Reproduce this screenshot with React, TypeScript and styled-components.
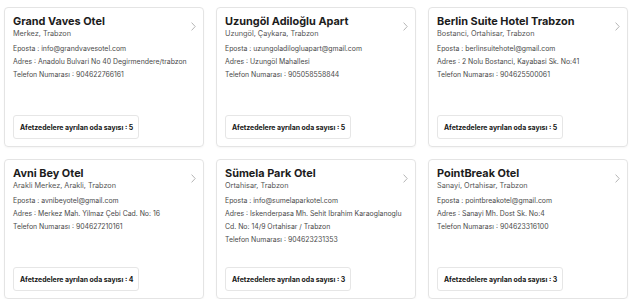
import styled, { createGlobalStyle } from 'styled-components'

const GlobalStyle = createGlobalStyle`
    body {
        margin: 0;
        background: #ffffff;
        font-family: Inter, 'Open Sans', sans-serif;
    }
`

const Grid = styled.div`
    display: grid;
    grid-template-columns: repeat(3, 200px);
    grid-auto-rows: 140px;
    gap: 12px;
    padding: 7px 0 0 4px;
`

const Card = styled.div`
    position: relative;
    display: flex;
    flex-direction: column;
    border: 1px solid #e4e4e4;
    border-radius: 4px;
    box-shadow: 0 1px 2px rgba(0, 0, 0, 0.04);
    padding: 6px 8px 7px 8px;
    box-sizing: border-box;
`

const Title = styled.h3`
    margin: 0;
    font-size: 10.9px;
    font-weight: 700;
    color: #1c1c1c;
    line-height: 14px;
`

const Location = styled.div`
    font-size: 7.3px;
    color: #555;
    line-height: 12px;
    margin-bottom: 2px;
`

const Info = styled.div`
    font-size: 6.9px;
    color: #4a4a4a;
    line-height: 13px;
`

const Chevron = styled.svg`
    position: absolute;
    top: 14px;
    right: 7px;
    width: 5px;
    height: 9px;
`

const Badge = styled.div`
    margin-top: auto;
    align-self: flex-start;
    border: 1px solid #e6e6e6;
    border-radius: 3px;
    padding: 7.5px 5px 6.5px 6px;
    font-size: 6.9px;
    font-weight: 700;
    color: #151515;
    line-height: 8px;
`

type Hotel = {
    name: string
    location: string
    email: string
    address: string[]
    phone: string
    rooms: number
}

const hotels: Hotel[] = [
    {
        name: 'Grand Vaves Otel',
        location: 'Merkez, Trabzon',
        email: 'info@grandvavesotel.com',
        address: ['Adres : Anadolu Bulvari No 40 Degirmendere/trabzon'],
        phone: '904622766161',
        rooms: 5,
    },
    {
        name: 'Uzungöl Adiloğlu Apart',
        location: 'Uzungöl, Çaykara, Trabzon',
        email: 'uzungoladilogluapart@gmail.com',
        address: ['Adres : Uzungöl Mahallesi'],
        phone: '905058558844',
        rooms: 5,
    },
    {
        name: 'Berlin Suite Hotel Trabzon',
        location: 'Bostanci, Ortahisar, Trabzon',
        email: 'berlinsuitehotel@gmail.com',
        address: ['Adres : 2 Nolu Bostanci, Kayabasi Sk. No:41'],
        phone: '904625500061',
        rooms: 5,
    },
    {
        name: 'Avni Bey Otel',
        location: 'Arakli Merkez, Arakli, Trabzon',
        email: 'avnibeyotel@gmail.com',
        address: ['Adres : Merkez Mah. Yilmaz Çebi Cad. No: 16'],
        phone: '904627210161',
        rooms: 4,
    },
    {
        name: 'Sümela Park Otel',
        location: 'Ortahisar, Trabzon',
        email: 'info@sumelaparkotel.com',
        address: [
            'Adres : Iskenderpasa Mh. Sehit Ibrahim Karaoglanoglu',
            'Cd. No: 14/9 Ortahisar / Trabzon',
        ],
        phone: '904623231353',
        rooms: 3,
    },
    {
        name: 'PointBreak Otel',
        location: 'Sanayi, Ortahisar, Trabzon',
        email: 'pointbreakotel@gmail.com',
        address: ['Adres : Sanayi Mh. Dost Sk. No:4'],
        phone: '904623316100',
        rooms: 3,
    },
]

export default function App() {
    return (
        <>
            <GlobalStyle />
            <Grid>
                {hotels.map((h) => (
                    <Card key={h.name}>
                        <Chevron viewBox="0 0 5 9">
                            <path
                                d="M0.6 0.6l3.6 3.9-3.6 3.9"
                                fill="none"
                                stroke="#b5b5b5"
                                strokeWidth="1"
                            />
                        </Chevron>
                        <Title>{h.name}</Title>
                        <Location>{h.location}</Location>
                        <Info>Eposta : {h.email}</Info>
                        {h.address.map((line) => (
                            <Info key={line}>{line}</Info>
                        ))}
                        <Info>Telefon Numarası : {h.phone}</Info>
                        <Badge>Afetzedelere ayrılan oda sayısı : {h.rooms}</Badge>
                    </Card>
                ))}
            </Grid>
        </>
    )
}
